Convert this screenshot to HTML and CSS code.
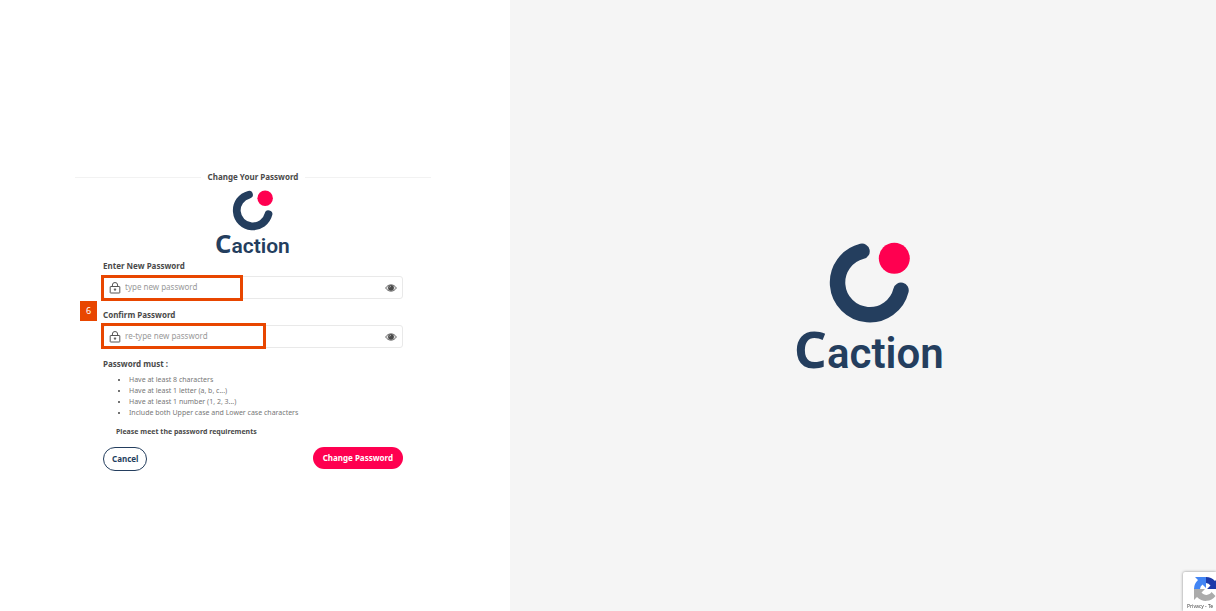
FILE: index.html
```html
<!DOCTYPE html>
<html lang="en">
<head>
<meta charset="utf-8">
<meta name="viewport" content="width=device-width, initial-scale=1">
<title>Change Your Password</title>
<link rel="stylesheet" href="styles.css">
</head>
<body>
<svg class="defs" aria-hidden="true">
  <symbol id="ring" viewBox="0 0 148 128">
    <path d="M66 9.3A32.2 32.2 0 1 0 105 48.3" fill="none" stroke="#243e5e" stroke-width="15.5" stroke-linecap="round"/>
    <circle cx="98.3" cy="16.3" r="15.5" fill="#ff0050"/>
  </symbol>
  <symbol id="lock" viewBox="0 0 12 12">
    <g fill="none" stroke="#555" stroke-width="1">
      <rect x="1.200" y="4.500" width="9.600" height="6.500" rx=".4"/>
      <path d="M3.400 4.500V3a2.600 2.500 0 0 1 5.200 0V4.500M6 6.500v2.500M4.800 7.300h2.400"/>
    </g>
  </symbol>
  <symbol id="eye" viewBox="0 0 12 8">
    <path d="M.6 4C2 1.9 3.8.8 6 .8S10 1.9 11.4 4C10 6.1 8.200 7.200 6 7.200S2 6.100.6 4Z" fill="#ddd" stroke="#666" stroke-width=".9"/>
    <circle cx="6" cy="3.800" r="2.900" fill="#4a4a4a"/>
    <path d="M4.600 3.600A1.500 1.500 0 0 1 6 2.200" fill="none" stroke="#ddd" stroke-width=".6"/>
  </symbol>
</svg>
<main class="page">
  <section class="panel">
    <form class="form">
      <h1 class="title">Change Your Password</h1>
      <div class="body">
        <svg class="logo logo-small" viewBox="0 0 148 128" role="img" aria-label="Caction">
          <use href="#ring"/>
          <text class="logo-text" y="125.5"><tspan class="logo-cap" x="-2">C</tspan><tspan x="31">action</tspan></text>
        </svg>
        <div class="field">
          <label class="label" for="new">Enter New Password</label>
          <div class="box">
            <svg class="lock" aria-hidden="true"><use href="#lock"/></svg>
            <input class="input" id="new" type="password" placeholder="type new password">
            <button class="eye-button" type="button" aria-label="Show new password"><svg class="eye"><use href="#eye"/></svg></button>
            <span class="mark mark-new"></span>
          </div>
        </div>
        <div class="field">
          <span class="step">6</span>
          <label class="label" for="confirm">Confirm Password</label>
          <div class="box">
            <svg class="lock" aria-hidden="true"><use href="#lock"/></svg>
            <input class="input" id="confirm" type="password" placeholder="re-type new password">
            <button class="eye-button" type="button" aria-label="Show confirmed password"><svg class="eye"><use href="#eye"/></svg></button>
            <span class="mark mark-confirm"></span>
          </div>
        </div>
        <h2 class="label">Password must :</h2>
        <ul class="rules">
          <li>Have at least 8 characters</li>
          <li>Have at least 1 letter (a, b, c...)</li>
          <li>Have at least 1 number (1, 2, 3...)</li>
          <li>Include both Upper case and Lower case characters</li>
        </ul>
        <p class="notice">Please meet the password requirements</p>
        <div class="actions">
          <button class="button button-outline" type="button">Cancel</button>
          <button class="button button-solid" type="submit">Change Password</button>
        </div>
      </div>
    </form>
  </section>
  <aside class="brand">
    <svg class="logo logo-large" viewBox="0 0 148 128" role="img" aria-label="Caction">
      <use href="#ring"/>
      <text class="logo-text" y="125.5"><tspan class="logo-cap" x="-2">C</tspan><tspan x="31">action</tspan></text>
    </svg>
  </aside>
</main>
<div class="captcha">
  <svg class="captcha-icon" viewBox="0 0 26 26" aria-hidden="true">
    <path d="M13 1a12 12 0 0 1 9 4l3-3v11h-11l3.500-3.500A6 6 0 0 0 13 7Z" fill="#1c3aa9"/>
    <path d="M1 13A12 12 0 0 1 5 4L2 1h11v11L9.500 8.500A6 6 0 0 0 7 13Z" fill="#4285f4"/>
    <path d="M1 13h11l-3.500 3.500a6 6 0 0 0 10-.5l4 4A12 12 0 0 1 4 21l-3 3Z" fill="#ababab"/>
  </svg>
  <span class="captcha-text">Privacy - Te</span>
</div>
</body>
</html>
```
FILE: styles.css
```css
* {
  box-sizing: border-box;
}

body {
  margin: 0;
  font-family: "Noto Sans", "Open Sans", sans-serif;
  font-size: 8px;
  line-height: 12px;
  color: #4a4a4a;
  background: #fff;
}

.defs {
  position: absolute;
  width: 0;
  height: 0;
}

.page {
  display: grid;
  grid-template-columns: 510fr 706fr;
  min-height: 100vh;
}

.panel {
  padding: 171px 79px 24px 75px;
}

.title {
  display: flex;
  align-items: center;
  gap: 7px;
  margin: 0;
  font-size: 8px;
  font-weight: 700;
}

.title::before,
.title::after {
  content: "";
  flex: 1;
  height: 1px;
  background: #f2f2f2;
}

.body {
  padding: 7px 28px 0;
}

.logo {
  display: block;
  overflow: visible;
}

.logo-small {
  width: 74px;
  height: 64px;
  margin: 0 auto 6px;
}

.logo-large {
  width: 148px;
  height: 128px;
}

.logo-text {
  font-family: Roboto, sans-serif;
  font-size: 42px;
  font-weight: 600;
  fill: #243e5e;
}

.logo-cap {
  font-family: "Noto Sans", sans-serif;
  font-size: 51px;
  font-weight: 700;
}

.field {
  position: relative;
  margin-bottom: 10px;
}

.label {
  display: block;
  margin: 0;
  font-size: 8px;
  font-weight: 700;
}

.box {
  position: relative;
  display: flex;
  align-items: center;
  gap: 4px;
  height: 23px;
  margin-top: 4px;
  padding: 0 5px;
  border: 1px solid #e9e9e9;
  border-radius: 3px;
}

.lock {
  width: 12px;
  height: 12px;
}

.input {
  flex: 1;
  min-width: 0;
  padding: 0 0 1px;
  border: 0;
  outline: 0;
  background: none;
  font: inherit;
  color: inherit;
}

.input::placeholder {
  color: #999;
  opacity: 1;
}

.eye-button {
  display: flex;
  padding: 0;
  border: 0;
  background: none;
}

.eye {
  width: 12px;
  height: 8px;
}

.mark {
  position: absolute;
  left: -3px;
  height: 26px;
  border: 3px solid #e84600;
  pointer-events: none;
}

.mark-new {
  top: -2px;
  width: 142px;
}

.mark-confirm {
  top: -3px;
  width: 165px;
}

.step {
  position: absolute;
  top: -8px;
  left: -23px;
  width: 17px;
  height: 20px;
  font-size: 9px;
  line-height: 20px;
  text-align: center;
  color: #fff;
  background: #e84600;
}

.rules {
  margin: 4px 0 8px;
  padding-left: 26px;
  font-size: 7px;
  line-height: 11px;
  color: #777;
}

.rules li::marker {
  color: #444;
}

.notice {
  margin: 0 0 9px;
  padding-left: 13px;
  font-size: 7px;
  font-weight: 700;
}

.actions {
  display: flex;
  justify-content: space-between;
  align-items: flex-start;
}

.button {
  border: 0;
  border-radius: 12px;
  font: inherit;
  font-weight: 700;
}

.button-outline {
  height: 24px;
  padding: 0 8px;
  border: 1px solid #243e5e;
  color: #243e5e;
  background: #fff;
}

.button-solid {
  height: 22px;
  padding: 0 10px;
  color: #fff;
  background: #ff0050;
}

.brand {
  display: flex;
  align-items: center;
  justify-content: center;
  padding-left: 13px;
  background: #f5f5f5;
}

.captcha {
  position: fixed;
  right: 0;
  bottom: 0;
  width: 33px;
  height: 39px;
  padding: 4px 0 0 4px;
  overflow: hidden;
  border-radius: 2px 0 0 0;
  background: #fff;
  box-shadow: 0 0 3px #888;
}

.captcha-icon {
  display: block;
  width: 26px;
  height: 26px;
  margin-left: 6px;
}

.captcha-text {
  display: block;
  font-size: 5px;
  line-height: 8px;
  white-space: nowrap;
  color: #444;
}
```
